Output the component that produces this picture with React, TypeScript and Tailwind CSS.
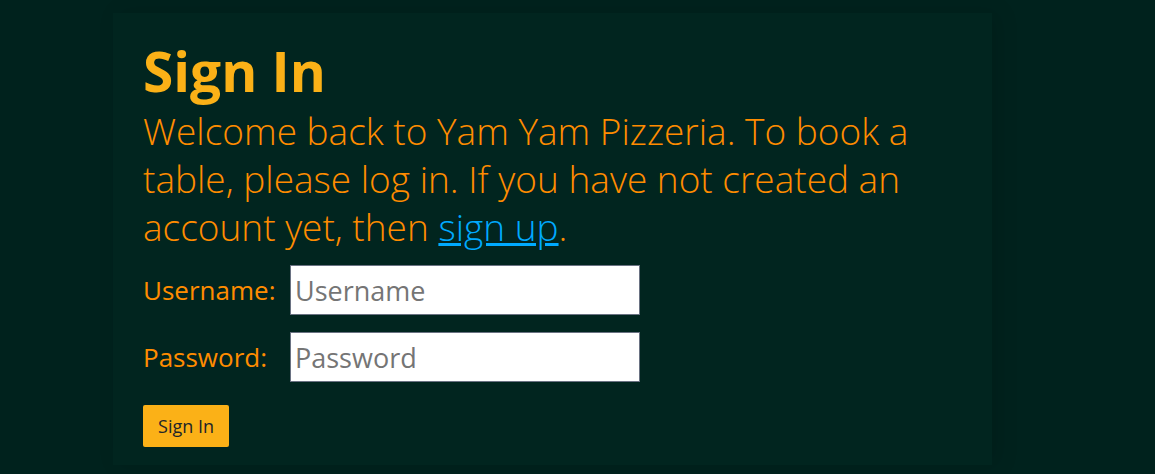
import React from 'react';

const FONT = { fontFamily: '"Open Sans", "Noto Sans", Arial, sans-serif' };

export default function App() {
  return (
    <div className="min-h-[474px] w-full bg-[#00221d] pt-[13px]" style={FONT}>
      <div className="ml-[113px] w-[879px] h-[452px] bg-[#01251f] px-[30px] pt-[25px] shadow-[6px_0_20px_rgba(0,0,0,0.12)]">
        <h1 className="text-[55px] font-bold leading-[1.2] text-[#fbb117]">Sign In</h1>
        <p className="mt-[3px] text-[37px] font-light leading-[48px] text-[#ff8c00]">
          Welcome back to Yam Yam Pizzeria. To book a table, please log in. If you have not created an
          account yet, then{' '}
          <a href="#" className="text-[#00aaff] underline">
            sign up
          </a>
          .
        </p>
        <form className="mt-[14px] flex flex-col" onSubmit={(e) => e.preventDefault()}>
          <div className="flex items-center">
            <label htmlFor="username" className="w-[147px] text-[26px] text-[#ff8c00]">
              Username:
            </label>
            <input
              id="username"
              placeholder="Username"
              className="h-[50px] w-[350px] border border-gray-500 bg-white px-1 text-[27px] text-gray-800 placeholder:text-[#757575] outline-none"
            />
          </div>
          <div className="mt-[17px] flex items-center">
            <label htmlFor="password" className="w-[147px] text-[26px] text-[#ff8c00]">
              Password:
            </label>
            <input
              id="password"
              type="password"
              placeholder="Password"
              className="h-[50px] w-[350px] border border-gray-500 bg-white px-1 text-[27px] text-gray-800 placeholder:text-[#757575] outline-none"
            />
          </div>
          <div className="mt-[23px]">
            <button type="submit" className="h-[42px] w-[86px] rounded-[2px] bg-[#fbb117] text-[18px] text-[#212529]">
              Sign In
            </button>
          </div>
        </form>
      </div>
    </div>
  );
}
